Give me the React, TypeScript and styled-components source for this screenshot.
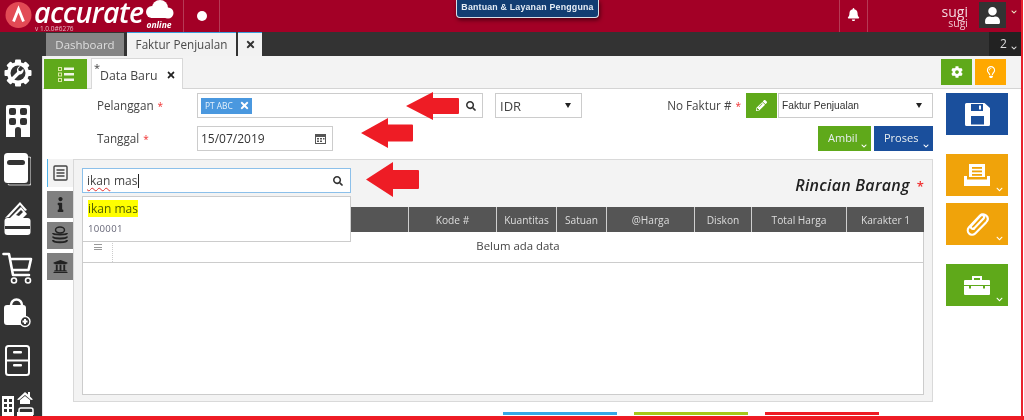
import React from "react";
import styled, { createGlobalStyle } from "styled-components";
import {
  FaBell, FaUser, FaSearch, FaPencilAlt, FaCog, FaRegLightbulb, FaInfo, FaUniversity,
  FaTimes, FaChevronDown,
} from "react-icons/fa";

const Global = createGlobalStyle`
  html, body { margin: 0; padding: 0; background: #fff; }
  #root { width: 1024px; height: 420px; overflow: hidden; }
  * { box-sizing: border-box; }
`;

const Frame = styled.div`
  width: 1024px; height: 420px; overflow: hidden; position: relative;
  border-bottom: 4px solid #ee1c25; padding-right: 1px; background: #fff;
  font-family: "Open Sans", "Liberation Sans", sans-serif; color: #333;
  filter: blur(0.3px);
`;
const Inner = styled.div`
  width: 1023px; height: 416px; border-right: 2px solid #e8212c; display: flex; flex-direction: column;
`;
const Header = styled.header`
  height: 32px; flex: none; background: #a30026; display: flex; align-items: stretch; color: #fff;
`;
const Logo = styled.div`
  width: 184px; flex: none; border-right: 1px solid #b63a55; display: flex; position: relative; padding-left: 5px;
  > svg { flex: none; }
`;
const LogoWords = styled.div`
  margin-left: 2px; display: flex; flex-direction: column; flex: none; width: 109px;
`;
const LogoName = styled.span`
  font: italic 600 28.5px/25px "Open Sans", sans-serif; letter-spacing: -0.55px; height: 25px; color: #fff; white-space: nowrap;
`;
const Version = styled.span`
  font-size: 6.5px; line-height: 7px; color: #e8b8c4; margin-left: 1px; white-space: nowrap;
`;
const CloudBox = styled.div`
  display: flex; flex-direction: column; align-items: center; margin-left: 1px; width: 30px; flex: none;
  > svg { flex: none; }
`;
const Online = styled.span`
  font: italic 700 8.5px/9px "Open Sans", sans-serif; color: #fff; margin-top: 1px;
`;
const DotCell = styled.div`
  width: 36px; flex: none; border-right: 1px solid #b63a55; display: flex; align-items: center; justify-content: center;
`;
const Dot = styled.span`
  width: 10px; height: 10px; border-radius: 50%; background: #fff;
`;
const Help = styled.div`
  margin-left: 236px; width: 143px; height: 17.5px; background: #123d72; border: 1px solid #d8dfe8; border-top: 0;
  border-radius: 0 0 4px 4px; color: #e6edf5; font: 700 8.8px/15px "Liberation Sans", sans-serif; white-space: nowrap;
  text-align: center; box-shadow: 1px 2px 4px rgba(0,0,0,.55); letter-spacing: .2px;
`;
const Spacer = styled.div` flex: 1; `;
const BellCell = styled.div`
  width: 29px; flex: none; border-left: 1px solid #b63a55; border-right: 1px solid #b63a55;
  display: flex; align-items: center; justify-content: center; padding-bottom: 4px; font-size: 13px;
`;
const UserNames = styled.div`
  width: 100px; flex: none; text-align: right; display: flex; flex-direction: column; padding-top: 5px; color: #f0c8d2;
`;
const UserTop = styled.span` font-size: 14px; line-height: 13px; color: #f3d7de; `;
const UserSub = styled.span` font-size: 10.5px; line-height: 11px; `;
const UserBox = styled.div`
  width: 27px; height: 26px; margin: 2px 0 0 11px; background: #333; display: flex; align-items: center; justify-content: center; flex: none; font-size: 17px; color: #fff;
`;
const UserCaret = styled.div`
  width: 15px; flex: none; display: flex; align-items: flex-start; justify-content: center; padding-top: 9px; font-size: 6px; color: #eec;
`;

const Body = styled.div` flex: 1; display: flex; min-height: 0; `;
const Sidebar = styled.nav`
  width: 42px; flex: none; background: #333; display: flex; flex-direction: column; align-items: flex-start; padding-top: 27px; overflow: hidden;
`;
const SideIcon = styled.svg<{ $mt: number; $ml: number }>`
  display: block; flex: none; margin: ${p => p.$mt}px 0 0 ${p => p.$ml}px;
`;

const Main = styled.main` flex: 1; min-width: 0; display: flex; flex-direction: column; position: relative; `;
const TabBar = styled.div`
  height: 24px; flex: none; background: #333; display: flex; align-items: flex-end; padding-left: 4px;
`;
const TopTab = styled.div<{ $kind: "muted" | "active" | "close" }>`
  height: ${p => (p.$kind === "muted" ? 23 : 24)}px;
  background: ${p => (p.$kind === "muted" ? "#858585" : "#f2f2f2")};
  color: ${p => (p.$kind === "muted" ? "#dedede" : "#4a4a4a")};
  border-top: ${p => (p.$kind === "muted" ? "0" : "1px solid #3b9fdc")};
  width: ${p => (p.$kind === "muted" ? 78 : p.$kind === "active" ? 109 : 24)}px;
  margin-right: ${p => (p.$kind === "muted" ? 3 : p.$kind === "active" ? 2 : 0)}px;
  font-size: ${p => (p.$kind === "muted" ? 11.5 : 11.7)}px; display: flex; align-items: center; justify-content: center; padding-bottom: 1px;
`;
const CloseTimes = styled(FaTimes)` font-size: 11px; color: #333; `;
const CountBox = styled.div`
  margin-left: auto; width: 32px; height: 24px; background: #222; color: #ddd; font-size: 12px; display: flex; padding: 3px 0 0 11px; position: relative;
`;
const CountCaret = styled(FaChevronDown)` font-size: 6px; margin: 10px 0 0 4px; color: #ddd; `;

const Toolbar = styled.div`
  height: 33px; flex: none; background: #f3f3f3; border-bottom: 1px solid #d4d4d4; border-left: 1px solid #ddd;
  display: flex; padding: 3px 15px 0 1px;
`;
const ListBtn = styled.div`
  width: 43px; height: 30px; background: #5fa91a; display: flex; align-items: center; justify-content: center;
`;
const DocTab = styled.div`
  margin-left: 4px; width: 92px; height: 31px; margin-top: -1px; background: #fff; border: 1px solid #d8d8d8; border-bottom: 0;
  font-size: 12.3px; color: #444; display: flex; align-items: center; padding: 2px 0 0 8px; position: relative;
`;
const Asterisk = styled.span` position: absolute; left: 2px; top: 1px; font-size: 11px; color: #444; `;
const DocClose = styled(FaTimes)` font-size: 10px; color: #222; margin-left: 8px; `;
const ToolBtn = styled.div<{ $bg: string }>`
  width: 31px; height: 26px; margin-left: 3px; background: ${p => p.$bg}; color: #fff; display: flex; align-items: center; justify-content: center; font-size: 12px;
`;

const Content = styled.div` flex: 1; display: flex; min-height: 0; background: #fff; border-left: 1px solid #e4e4e4; `;
const FormCol = styled.div` width: 890px; flex: none; padding-top: 4px; display: flex; flex-direction: column; `;
const Row = styled.div<{ $h: number; $mt?: number }>`
  height: ${p => p.$h}px; margin-top: ${p => p.$mt ?? 0}px; padding-left: 54px; display: flex; align-items: stretch;
`;
const Label = styled.label`
  width: 100px; flex: none; font-size: 11.7px; color: #444; line-height: 25px;
`;
const Star = styled.span` color: #f03030; margin-left: 1px; font-size: 10px; `;
const Field = styled.div<{ $w: number; $ml?: number }>`
  width: ${p => p.$w}px; margin-left: ${p => p.$ml ?? 0}px; flex: none; border: 1px solid #ccc; background: #fff; display: flex; align-items: center; padding: 0 6px 0 3px; font-size: 12px; color: #333;
`;
const Chip = styled.span`
  height: 16px; background: #4a98df; color: #e8f2fb; font-size: 8.4px; display: inline-flex; align-items: center; padding: 0 2px 0 4px; gap: 6px;
`;
const ChipX = styled(FaTimes)` font-size: 11px; color: #fff; `;
const Push = styled.div` flex: 1; `;
const SearchIcon = styled(FaSearch)` margin-left: auto; font-size: 10px; color: #333; `;
const Caret = styled.span`
  margin-left: auto; width: 0; height: 0; border-left: 3px solid transparent; border-right: 3px solid transparent; border-top: 5px solid #222; margin-right: 4px;
`;
const IdrText = styled.span` margin-left: 1px; font-size: 13px; color: #444; `;
const FakturLabel = styled.span` font-size: 11.7px; color: #444; line-height: 25px; margin-right: 5px; `;
const Pencil = styled.div`
  width: 31px; flex: none; background: #5fa91a; color: #fff; display: flex; align-items: center; justify-content: center; font-size: 11px; margin-right: 1px;
`;
const SelText = styled.span` font: 10.2px "Liberation Sans", sans-serif; color: #333; `;
const ActionBtn = styled.div<{ $bg: string; $w: number; $pl: number }>`
  width: ${p => p.$w}px; flex: none; margin-left: 3px; background: ${p => p.$bg}; color: #e8eef0; font-size: 11px;
  position: relative; padding: 4px 0 0 ${p => p.$pl}px;
`;
const BtnCaret = styled(FaChevronDown)`
  position: absolute; right: 4px; bottom: 2px; font-size: 6px; color: #fff;
`;
const CalSlot = styled.span` margin-left: auto; display: flex; `;

const PanelRow = styled.div` margin-top: 8px; height: 243px; padding-left: 4px; display: flex; `;
const SideTabs = styled.div` width: 26px; flex: none; display: flex; flex-direction: column; gap: 4px; `;
const SideTab = styled.div<{ $active?: boolean }>`
  height: ${p => (p.$active ? 28 : 27)}px; background: ${p => (p.$active ? "#f3f3f3" : "#808080")};
  border-left: ${p => (p.$active ? "1px solid #4fb3ea" : "0")};
  display: flex; align-items: center; justify-content: center; color: #222; font-size: 15px;
`;
const Panel = styled.section`
  width: 860px; flex: none; background: #f3f3f3; border: 1px solid #d9d9d9; padding: 8px 8px 6px; display: flex; flex-direction: column; position: relative;
`;
const PanelTop = styled.div` height: 39px; flex: none; display: flex; `;
const SearchBox = styled.div`
  width: 269px; height: 25px; background: #fff; border: 1px solid #8cc0ea; display: flex; align-items: center; padding: 0 7px 0 4px; font-size: 12px; color: #444;
`;
const Typo = styled.span` text-decoration: underline wavy #e03030 1px; text-underline-offset: 2px; `;
const Cursor = styled.span` display: inline-block; width: 1px; height: 14px; background: #222; margin-left: 1px; vertical-align: -3px; `;
const Typed = styled.span` display: flex; align-items: center; gap: 3.5px; `;
const Title = styled.h2`
  margin: 5px 0 0 auto; font: italic 600 16px/24px "Open Sans", sans-serif; color: #222; letter-spacing: .25px;
`;
const TitleStar = styled.span` color: #f03030; margin-left: 7px; font-style: normal; font-size: 13px; `;
const Table = styled.div`
  flex: 1; min-height: 0; background: #fff; border: 1px solid #ccc; border-top: 0; display: flex; flex-direction: column;
`;
const HeadRow = styled.div`
  height: 25px; flex: none; margin: 0 -1px; display: grid; grid-template-columns: 327px 88px 60px 50px 88px 57px 95px 77px; background: #555;
`;
const Th = styled.div`
  color: #ddd; font-size: 10.2px; display: flex; align-items: center; justify-content: center; border-right: 1px solid #cfcfcf;
  &:last-child { border-right: 0; }
`;
const EmptyRow = styled.div` height: 31px; flex: none; display: flex; border-bottom: 1px solid #ccc; `;
const HandleCell = styled.div`
  width: 30px; flex: none; border-right: 1px dotted #ccc; display: flex; flex-direction: column; align-items: center; padding-top: 12px; gap: 1.5px;
`;
const HandleLine = styled.span` width: 8px; height: 1px; background: #999; `;
const EmptyMsg = styled.div` flex: 1; text-align: center; font-size: 11.4px; color: #444; line-height: 28px; `;

const Dropdown = styled.div`
  position: absolute; left: 8px; top: 36px; width: 269px; height: 46px; background: #fff; border: 1px solid #ccc; padding: 3px 5px; z-index: 2;
`;
const Hit = styled.div`
  width: fit-content; background: #ff0; color: #4f5c00; font-size: 12px; line-height: 17px; height: 17px;
`;
const Code = styled.div` font-size: 9.6px; line-height: 14px; color: #667; margin-top: 5px; letter-spacing: .3px; `;

const ActionCol = styled.aside` width: 62px; flex: none; margin-left: 13px; padding-top: 4px; display: flex; flex-direction: column; `;
const BigBtn = styled.div<{ $bg: string; $mt: number }>`
  width: 62px; height: 42px; margin-top: ${p => p.$mt}px; background: ${p => p.$bg}; position: relative; display: flex; align-items: center; justify-content: center; color: #fff;
`;
const BigCaret = styled(FaChevronDown)` position: absolute; right: 5px; bottom: 3px; font-size: 7px; color: #fff; `;

const BottomLines = styled.div`
  position: absolute; left: 461px; top: 380px; display: flex; gap: 17px;
`;
const BottomLine = styled.span<{ $c: string }>` width: 114px; height: 3px; background: ${p => p.$c}; `;

const ArrowSvg = styled.svg<{ $l: number; $t: number }>`
  position: absolute; left: ${p => p.$l}px; top: ${p => p.$t}px; z-index: 5;
`;
const Arrow = ({ l, t, w, h, neck, thick }: { l: number; t: number; w: number; h: number; neck: number; thick: number }) => {
  const m = h / 2, a = m - thick / 2, b = m + thick / 2;
  return (
    <ArrowSvg $l={l} $t={t} width={w} height={h} viewBox={`0 0 ${w} ${h}`}>
      <path d={`M0 ${m}L${neck} 0V${a}H${w - 1}Q${w} ${a} ${w} ${a + 1}V${b - 1}Q${w} ${b} ${w - 1} ${b}H${neck}V${h}Z`} fill="#ee1c25" />
    </ArrowSvg>
  );
};

const Gear = () => (
  <SideIcon $mt={0} $ml={3.5} width="28" height="28" viewBox="0 0 28 28">
    <g fill="#fff">
      {[0, 45, 90, 135].map(a => <rect key={a} x="11" y="0.5" width="6" height="27" rx="1" transform={`rotate(${a} 14 14)`} />)}
      <circle cx="14" cy="14" r="11" />
    </g>
    <circle cx="14" cy="14" r="7.5" fill="#333" />
    <path d="M9 19.5L14.5 14" stroke="#fff" strokeWidth="3.4" strokeLinecap="round" />
    <path d="M14 15a4 4 0 0 0 5.3-5.2l-2.6 2.4-2-.5-.5-2 2.4-2.6A4 4 0 0 0 13 12z" fill="#fff" />
  </SideIcon>
);
const Building = () => (
  <SideIcon $mt={18} $ml={6} width="24" height="32" viewBox="0 0 24 32">
    <path d="M2 0H22a2 2 0 0 1 2 2V32H15V25a3 3 0 0 0-6 0V32H0V2a2 2 0 0 1 2-2z" fill="#fff" />
    {[[3, 3], [14, 3], [3, 13], [14, 13]].map(([x, y]) => <rect key={`${x}${y}`} x={x} y={y} width="7" height="7" rx="2" fill="#333" />)}
  </SideIcon>
);
const Notebook = () => (
  <SideIcon $mt={16} $ml={3} width="28" height="33" viewBox="0 0 28 33">
    <path d="M25 4h1a2 2 0 0 1 2 2v24a2 2 0 0 1-2 2H7a2 2 0 0 1-2-1" fill="none" stroke="#ccc" strokeWidth="1.2" />
    <rect x="1" y="0" width="24" height="30" rx="3.5" fill="#fff" />
    <rect x="4" y="7" width="18" height="5" rx="2.5" fill="#333" />
  </SideIcon>
);
const Wallet = () => (
  <SideIcon $mt={15} $ml={4} width="27" height="35" viewBox="0 0 27 35">
    <path d="M1 17L16 1l7 8-2 1-5-6L5 16z" fill="#fff" />
    <path d="M6 17L17 6l6 7-4 4z" fill="#fff" />
    <path d="M12 14l5-5 2 2-4 4z" fill="#333" />
    <rect x="0.5" y="17" width="26" height="17" rx="3" fill="#fff" />
    <rect x="1" y="25" width="25" height="3" fill="#333" />
  </SideIcon>
);
const Cart = () => (
  <SideIcon $mt={16} $ml={2} width="31" height="32" viewBox="0 0 31 32">
    <g fill="none" stroke="#fff" strokeWidth="2.6" strokeLinejoin="round" strokeLinecap="round">
      <path d="M1.5 2H7l4 21h16" />
      <path d="M8.5 7H29l-2.5 11H10.5" />
    </g>
    <circle cx="12" cy="28.5" r="2.5" fill="none" stroke="#fff" strokeWidth="1.6" />
    <circle cx="26" cy="28.5" r="2.5" fill="none" stroke="#fff" strokeWidth="1.6" />
  </SideIcon>
);
const BagPlus = () => (
  <SideIcon $mt={14} $ml={4} width="27" height="30" viewBox="0 0 27 30">
    <path d="M7 9V7a5.5 5.5 0 0 1 11 0v2" fill="none" stroke="#fff" strokeWidth="2.5" />
    <path d="M3 7H19a3 3 0 0 1 3 3V18a7 7 0 0 0-5 9H3a3 3 0 0 1-3-3V10a3 3 0 0 1 3-3z" fill="#fff" />
    <circle cx="21" cy="23.5" r="5" fill="none" stroke="#fff" strokeWidth="1.4" />
    <path d="M18.5 23.5h5M21 21v5" stroke="#fff" strokeWidth="2" />
  </SideIcon>
);
const Cabinet = () => (
  <SideIcon $mt={17} $ml={5} width="25" height="31" viewBox="0 0 25 31">
    <rect x="1" y="1" width="23" height="29" rx="2.5" fill="none" stroke="#fff" strokeWidth="2" />
    <rect x="1" y="14.5" width="23" height="2" fill="#fff" />
    <rect x="8" y="6" width="9" height="2.5" rx="1" fill="#fff" />
    <rect x="8" y="19" width="9" height="2.5" rx="1" fill="#fff" />
  </SideIcon>
);
const Homes = () => (
  <SideIcon $mt={15} $ml={2} width="32" height="28" viewBox="0 0 32 28">
    <rect x="0" y="5" width="12" height="23" fill="#fff" />
    {[2, 7].flatMap(x => [8, 13, 18].map(y => <rect key={`${x}-${y}`} x={x} y={y} width="3" height="3" fill="#333" />))}
    <path d="M15 8.5L23 1l3 2.5V1h2v4.5l3 3-2 .5-6-5-6 5z" fill="#fff" />
    <path d="M18 9l5-4 5 4v4H18z" fill="#fff" />
    <path d="M17 24v-5a2 2 0 0 1 2-2h10a2 2 0 0 1 2 2v5" fill="none" stroke="#fff" strokeWidth="1.5" />
    <rect x="15" y="21" width="16" height="7" fill="#fff" />
  </SideIcon>
);
const ChecklistIcon = () => (
  <svg width="16" height="15" viewBox="0 0 16 15" fill="#f0f5e6">
    {[0, 5.5, 11].map(y => (
      <g key={y}>
        <rect x="0.5" y={y + 0.5} width="3" height="3" fill="none" stroke="#d8e8a0" strokeWidth="1" />
        <rect x="6" y={y + 0.5} width="10" height="2.5" />
      </g>
    ))}
  </svg>
);
const SaveGlyph = () => (
  <svg width="25" height="23" viewBox="0 0 25 23">
    <path d="M1.5 0H19.5L25 5V21.5A1.5 1.5 0 0 1 23.5 23H1.5A1.5 1.5 0 0 1 0 21.5V1.5A1.5 1.5 0 0 1 1.5 0z" fill="#fff" />
    <rect x="6" y="1" width="12" height="7" fill="#1a4f9c" />
    <rect x="14" y="2.5" width="2" height="4" fill="#fff" />
    <rect x="6" y="13" width="13" height="8.5" fill="#1a4f9c" />
  </svg>
);
const PrintIcon = () => (
  <svg width="26" height="22" viewBox="0 0 26 22" fill="#fff">
    <path d="M5 0H21V13H5z" />
    <path d="M0 12h3v3.5h20V12h3v10H0z" />
    <g fill="#f0a30a"><rect x="8" y="3" width="10" height="1.8" /><rect x="8" y="6.5" width="10" height="1.8" /><rect x="8" y="10" width="10" height="1.8" /></g>
  </svg>
);
const ClipGlyph = () => (
  <svg width="24" height="26" viewBox="0 0 24 26" fill="none" stroke="#fff" strokeWidth="2.2" strokeLinecap="round">
    <path d="M9 17.5L18.5 7.5a2.2 2.2 0 0 0-3.4-2.9L3.8 16.5a4.4 4.4 0 0 0 6.2 6.2L21 11.5" />
    <path d="M9 17.5a2 2 0 0 1-2.8-2.8L15.6 4.6a4.3 4.3 0 0 1 6.4 5.6" />
  </svg>
);
const CaseIcon = () => (
  <svg width="26" height="19" viewBox="0 0 26 19" fill="#fff">
    <path d="M9 4V1h8v3" fill="none" stroke="#fff" strokeWidth="2" />
    <rect x="0" y="4" width="26" height="15" rx="1" />
    <rect x="0" y="9" width="26" height="1" fill="#5fa91a" />
    <rect x="5" y="9" width="2" height="3.5" fill="#5fa91a" /><rect x="19" y="9" width="2" height="3.5" fill="#5fa91a" />
  </svg>
);
const CloudIcon = () => (
  <svg width="29" height="19" viewBox="0 0 29 19" fill="#fff">
    <circle cx="15" cy="8" r="8" /><circle cx="7" cy="12" r="6" /><circle cx="23" cy="13" r="5.5" /><rect x="6" y="11" width="17" height="7" />
  </svg>
);
const LogoMark = () => (
  <svg width="27" height="30" viewBox="0 0 27 30">
    <circle cx="13.5" cy="15" r="13" fill="#e24a55" />
    <path d="M8.5 21.5L13.5 9l5 12.5" fill="none" stroke="#fff" strokeWidth="2.8" />
  </svg>
);
const DocListIcon = () => (
  <svg width="15" height="16" viewBox="0 0 15 16" fill="none" stroke="#444">
    <rect x="1" y="1" width="13" height="14" rx="1" strokeWidth="1.4" />
    <path d="M3.5 5h8M3.5 8h8M3.5 11h8" strokeWidth="1.3" />
  </svg>
);
const CoinsIcon = () => (
  <svg width="16" height="19" viewBox="0 0 16 19" fill="none" stroke="#222" strokeWidth="1.5">
    <ellipse cx="8" cy="4" rx="4.5" ry="3" />
    <path d="M1 7c0 2 14 2 14 0M1 10.5c0 2.5 14 2.5 14 0M1 14c0 3 14 3 14 0" strokeWidth="2" />
  </svg>
);
const CalIcon = () => (
  <svg width="11" height="11" viewBox="0 0 11 11" fill="#555">
    <path d="M0 1h11v10H0z" />
    <path d="M1 4h9v6H1z" fill="#fff" />
    <g><rect x="2" y="5" width="2" height="1.5" /><rect x="5" y="5" width="2" height="1.5" /><rect x="8" y="5" width="1.5" height="1.5" /><rect x="2" y="7.5" width="2" height="1.5" /><rect x="5" y="7.5" width="2" height="1.5" /></g>
  </svg>
);

const cols = ["", "Kode #", "Kuantitas", "Satuan", "@Harga", "Diskon", "Total Harga", "Karakter 1"];

export default function App() {
  return (
    <>
      <Global />
      <Frame>
        <Inner>
          <Header>
            <Logo>
              <LogoMark />
              <LogoWords>
                <LogoName>accurate</LogoName>
                <Version>v 1.0.0#6276</Version>
              </LogoWords>
              <CloudBox>
                <CloudIcon />
                <Online>online</Online>
              </CloudBox>
            </Logo>
            <DotCell><Dot /></DotCell>
            <Help>Bantuan &amp; Layanan Pengguna</Help>
            <Spacer />
            <BellCell><FaBell /></BellCell>
            <UserNames>
              <UserTop>sugi</UserTop>
              <UserSub>sugi</UserSub>
            </UserNames>
            <UserBox><FaUser /></UserBox>
            <UserCaret><FaChevronDown /></UserCaret>
          </Header>
          <Body>
            <Sidebar>
              <Gear />
              <Building />
              <Notebook />
              <Wallet />
              <Cart />
              <BagPlus />
              <Cabinet />
              <Homes />
            </Sidebar>
            <Main>
              <TabBar>
                <TopTab $kind="muted">Dashboard</TopTab>
                <TopTab $kind="active">Faktur Penjualan</TopTab>
                <TopTab $kind="close"><CloseTimes /></TopTab>
                <CountBox>2<CountCaret /></CountBox>
              </TabBar>
              <Toolbar>
                <ListBtn><ChecklistIcon /></ListBtn>
                <DocTab>
                  <Asterisk>*</Asterisk>
                  Data Baru
                  <DocClose />
                </DocTab>
                <Spacer />
                <ToolBtn $bg="#5fa91a"><FaCog /></ToolBtn>
                <ToolBtn $bg="#ffa800"><FaRegLightbulb /></ToolBtn>
              </Toolbar>
              <Content>
                <FormCol>
                  <Row $h={25}>
                    <Label>Pelanggan <Star>*</Star></Label>
                    <Field $w={286}>
                      <Chip>PT ABC <ChipX /></Chip>
                      <SearchIcon />
                    </Field>
                    <Field $w={87} $ml={12}>
                      <IdrText>IDR</IdrText>
                      <Caret />
                    </Field>
                    <Push />
                    <FakturLabel>No Faktur # <Star>*</Star></FakturLabel>
                    <Pencil><FaPencilAlt /></Pencil>
                    <Field $w={155}>
                      <SelText>Faktur Penjualan</SelText>
                      <Caret />
                    </Field>
                  </Row>
                  <Row $h={25} $mt={8}>
                    <Label>Tanggal <Star>*</Star></Label>
                    <Field $w={136}>
                      15/07/2019
                      <CalSlot><CalIcon /></CalSlot>
                    </Field>
                    <Push />
                    <ActionBtn $bg="#5fa91a" $w={53} $pl={10}>Ambil<BtnCaret /></ActionBtn>
                    <ActionBtn $bg="#1a4f9c" $w={59} $pl={10}>Proses<BtnCaret /></ActionBtn>
                  </Row>
                  <PanelRow>
                    <SideTabs>
                      <SideTab $active><DocListIcon /></SideTab>
                      <SideTab><FaInfo /></SideTab>
                      <SideTab><CoinsIcon /></SideTab>
                      <SideTab><FaUniversity /></SideTab>
                    </SideTabs>
                    <Panel>
                      <PanelTop>
                        <SearchBox>
                          <Typed><Typo>ikan</Typo><span>mas<Cursor /></span></Typed>
                          <SearchIcon />
                        </SearchBox>
                        <Title>Rincian Barang<TitleStar>*</TitleStar></Title>
                      </PanelTop>
                      <Table>
                        <HeadRow>{cols.map((c, i) => <Th key={i}>{c}</Th>)}</HeadRow>
                        <EmptyRow>
                          <HandleCell><HandleLine /><HandleLine /><HandleLine /></HandleCell>
                          <EmptyMsg>Belum ada data</EmptyMsg>
                        </EmptyRow>
                      </Table>
                      <Dropdown>
                        <Hit>ikan mas</Hit>
                        <Code>100001</Code>
                      </Dropdown>
                    </Panel>
                  </PanelRow>
                </FormCol>
                <ActionCol>
                  <BigBtn $bg="#1a4f9c" $mt={0}><SaveGlyph /></BigBtn>
                  <BigBtn $bg="#f0a30a" $mt={19}><PrintIcon /><BigCaret /></BigBtn>
                  <BigBtn $bg="#f0a30a" $mt={7}><ClipGlyph /><BigCaret /></BigBtn>
                  <BigBtn $bg="#5fa91a" $mt={19}><CaseIcon /><BigCaret /></BigBtn>
                </ActionCol>
              </Content>
              <BottomLines>
                <BottomLine $c="#35a9e6" />
                <BottomLine $c="#a5c81a" />
                <BottomLine $c="#ee1c25" />
              </BottomLines>
            </Main>
          </Body>
        </Inner>
        <Arrow l={406} t={92} w={53} h={28} neck={27} thick={16} />
        <Arrow l={361} t={118} w={52} h={30} neck={27} thick={17} />
        <Arrow l={366} t={162} w={53} h={35} neck={27} thick={19} />
      </Frame>
    </>
  );
}
